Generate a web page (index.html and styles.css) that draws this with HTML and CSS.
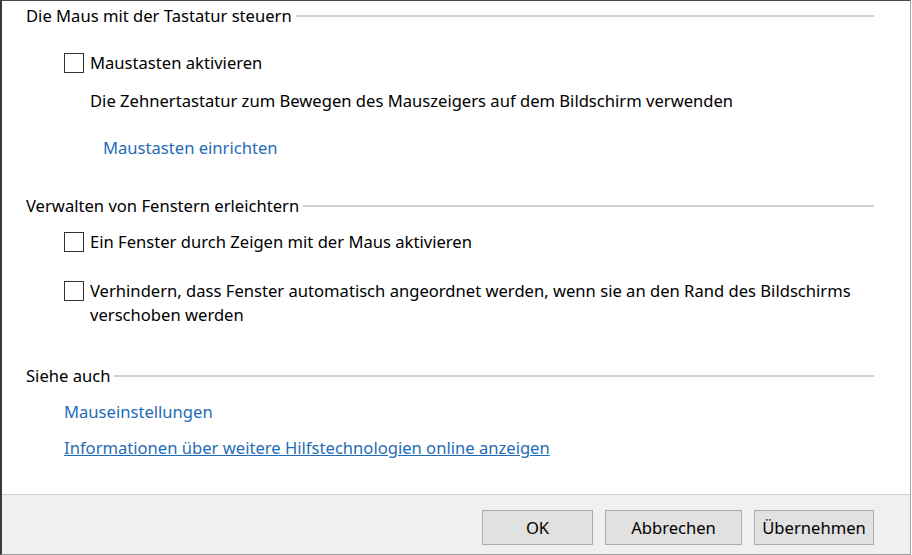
FILE: index.html
```html
<!DOCTYPE html>
<html lang="de">
<head>
<meta charset="utf-8">
<link rel="stylesheet" href="styles.css">
</head>
<body>
<div class="window">
  <div class="content">
    <div class="group-title h1"><span>Die Maus mit der Tastatur steuern</span><i class="rule"></i></div>
    <label class="check r-cb1"><span class="box"></span><span>Maustasten aktivieren</span></label>
    <div class="desc r-desc">Die Zehnertastatur zum Bewegen des Mauszeigers auf dem Bildschirm verwenden</div>
    <div class="r-link"><a class="link sub">Maustasten einrichten</a></div>

    <div class="group-title h2"><span>Verwalten von Fenstern erleichtern</span><i class="rule"></i></div>
    <label class="check r-cb2"><span class="box"></span><span>Ein Fenster durch Zeigen mit der Maus aktivieren</span></label>
    <label class="check r-cb3"><span class="box"></span><span>Verhindern, dass Fenster automatisch angeordnet werden, wenn sie an den Rand des Bildschirms verschoben werden</span></label>

    <div class="group-title h3"><span>Siehe auch</span><i class="rule"></i></div>
    <div class="r-l1"><a class="link">Mauseinstellungen</a></div>
    <div class="r-l2"><a class="link under">Informationen über weitere Hilfstechnologien online anzeigen</a></div>
  </div>
  <div class="footer">
    <button class="btn b-ok">OK</button>
    <button class="btn b-cancel">Abbrechen</button>
    <button class="btn b-apply">Übernehmen</button>
  </div>
</div>
</body>
</html>
```

FILE: styles.css
```css
html, body {
  margin: 0;
  padding: 0;
  background: #ffffff;
}
body {
  font-family: "Noto Sans", "Open Sans", sans-serif;
  font-size: 16.6px;
  color: #000;
}
.window {
  box-sizing: border-box;
  width: 911px;
  height: 555px;
  border-left: 2px solid #3a3a3a;
  border-top: 1px solid #4a4a4a;
  border-right: 1px solid #a8a8a8;
  border-bottom: 1px solid #9a9a9a;
  display: flex;
  flex-direction: column;
  background: #fff;
}
.content {
  flex: 1;
  padding: 3px 0 0 24px;
  line-height: 24px;
}
.group-title {
  display: flex;
  align-items: center;
  width: 848px;
}
.group-title .rule {
  flex: 1;
  height: 2px;
  background: #d0d0d0;
  margin-left: 4px;
}
.check {
  display: flex;
  align-items: flex-start;
  margin-left: 38px;
  width: 800px;
}
.box {
  flex: none;
  box-sizing: border-box;
  width: 20px;
  height: 20px;
  border: 1px solid #333;
  margin: 2px 6px 0 0;
  background: #fff;
}
.desc { margin-left: 64px; }
.link {
  color: #1f6cb8;
  cursor: pointer;
}
.link.under { text-decoration: underline; }
.sub { margin-left: 77px; }
.r-l1, .r-l2 { margin-left: 38px; }

.r-cb1 { margin-top: 23px; }
.r-desc { margin-top: 14px; }
.r-link { margin-top: 23px; }
.h2 { margin-top: 34px; }
.r-cb2 { margin-top: 12px; }
.r-cb3 { margin-top: 25px; }
.h3 { margin-top: 37px; }
.r-l1 { margin-top: 12px; }
.r-l2 { margin-top: 12px; }

.footer {
  flex: none;
  box-sizing: border-box;
  height: 60px;
  border-top: 1px solid #cfcfcf;
  background: #f0f0f0;
  display: flex;
  justify-content: flex-end;
  align-items: flex-start;
  gap: 12px;
  padding: 15px 36px 0 0;
}
.btn {
  box-sizing: border-box;
  height: 35px;
  background: #e1e1e1;
  border: 1px solid #adadad;
  font-family: inherit;
  font-size: 16.6px;
  color: #000;
  padding: 0;
}
.b-ok { width: 111px; }
.b-cancel { width: 137px; }
.b-apply { width: 120px; }
```
